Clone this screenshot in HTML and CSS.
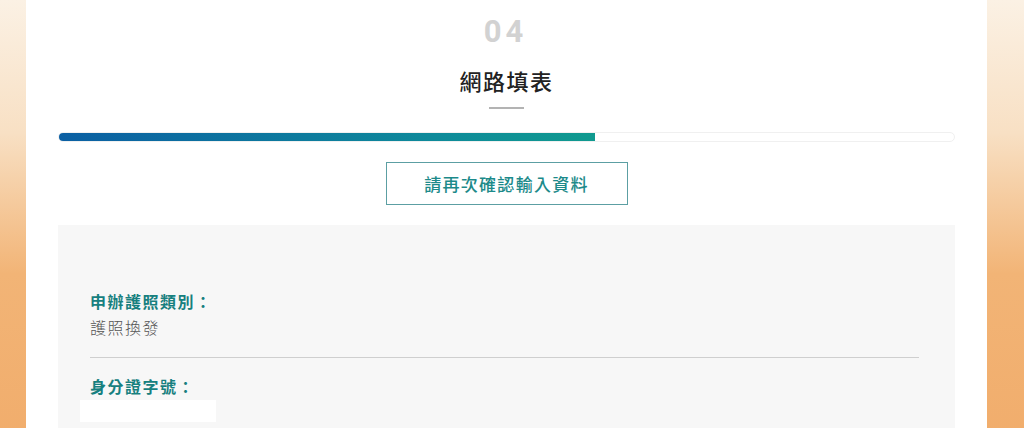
FILE: index.html
```html
<!DOCTYPE html>
<html lang="zh-Hant">
<head>
    <meta charset="UTF-8">
    <meta name="viewport" content="width=device-width, initial-scale=1.0">
    <title>網路填表</title>
    <link rel="stylesheet" href="styles.css">
</head>
<body>
    <div class="page">
        <div class="container">
            <div class="step-head">
                <div class="step-no">04</div>
                <h1 class="step-title">網路填表</h1>
                <div class="step-rule"></div>
            </div>

            <div class="progress">
                <div class="progress-fill" style="width: 60%"></div>
            </div>

            <div class="confirm">
                <div class="confirm-box">請再次確認輸入資料</div>
            </div>

            <div class="review">
                <div class="field">
                    <div class="field-label">申辦護照類別：</div>
                    <div class="field-value">護照換發</div>
                </div>
                <div class="field">
                    <div class="field-label">身分證字號：</div>
                    <div class="field-mask"></div>
                </div>
            </div>
        </div>
    </div>
</body>
</html>
```

FILE: styles.css
```css
body {
    margin: 0;
    font-family: "Noto Sans CJK TC", "Noto Sans", sans-serif;
    overflow: hidden;
}
.page {
    min-height: 428px;
    background: linear-gradient(to bottom, #fbf1e4 0%, #f8e0c4 30%, #f2b476 62%, #f1ad6c 100%);
}
.container {
    width: 897px;
    margin-left: 26px;
    padding: 14px 32px 0;
    min-height: 414px;
    background-color: #fff;
}
.step-head {
    text-align: center;
}
.step-no {
    font-family: "Roboto", "Liberation Sans", sans-serif;
    font-size: 31px;
    font-weight: bold;
    line-height: 36px;
    letter-spacing: 4px;
    padding-right: 2px;
    color: #d2d2d2;
}
.step-title {
    margin: 15px 0 0;
    font-size: 22px;
    font-weight: 500;
    line-height: 30px;
    letter-spacing: 1.5px;
    color: #222;
}
.step-rule {
    width: 35px;
    height: 2px;
    margin: 12px auto 0;
    background-color: #b3b3b3;
}
.progress {
    margin-top: 23px;
    height: 10px;
    border: 1px solid #f0f0f0;
    border-radius: 6px;
    box-sizing: border-box;
    overflow: hidden;
}
.progress-fill {
    height: 100%;
    margin: -1px 0 0 -1px;
    padding-bottom: 2px;
    border-radius: 6px 0 0 6px;
    background: linear-gradient(to right, #0b5fa3, #0e8a9a 70%, #109a8f);
}
.confirm {
    display: flex;
    justify-content: center;
    margin-top: 20px;
}
.confirm-box {
    width: 240px;
    height: 41px;
    border: 1px solid #5c9fa3;
    display: flex;
    align-items: center;
    justify-content: center;
    font-size: 17px;
    font-weight: 500;
    letter-spacing: 1.3px;
    color: #1c8a8a;
}
.review {
    margin-top: 20px;
    padding: 64px 36px 20px 32px;
    background-color: #f7f7f7;
}
.field + .field {
    margin-top: 16px;
}
.field:first-child {
    padding-bottom: 18px;
    border-bottom: 1px solid #cfcfcf;
}
.field-label {
    font-size: 16px;
    font-weight: bold;
    line-height: 24px;
    letter-spacing: 1.5px;
    color: #17807f;
}
.field-value {
    margin-top: 2px;
    font-size: 16px;
    font-weight: 300;
    line-height: 24px;
    letter-spacing: 1.5px;
    color: #555;
}
.field-mask {
    width: 136px;
    height: 22px;
    margin: 2px 0 0 -10px;
    background-color: #fff;
}
```
